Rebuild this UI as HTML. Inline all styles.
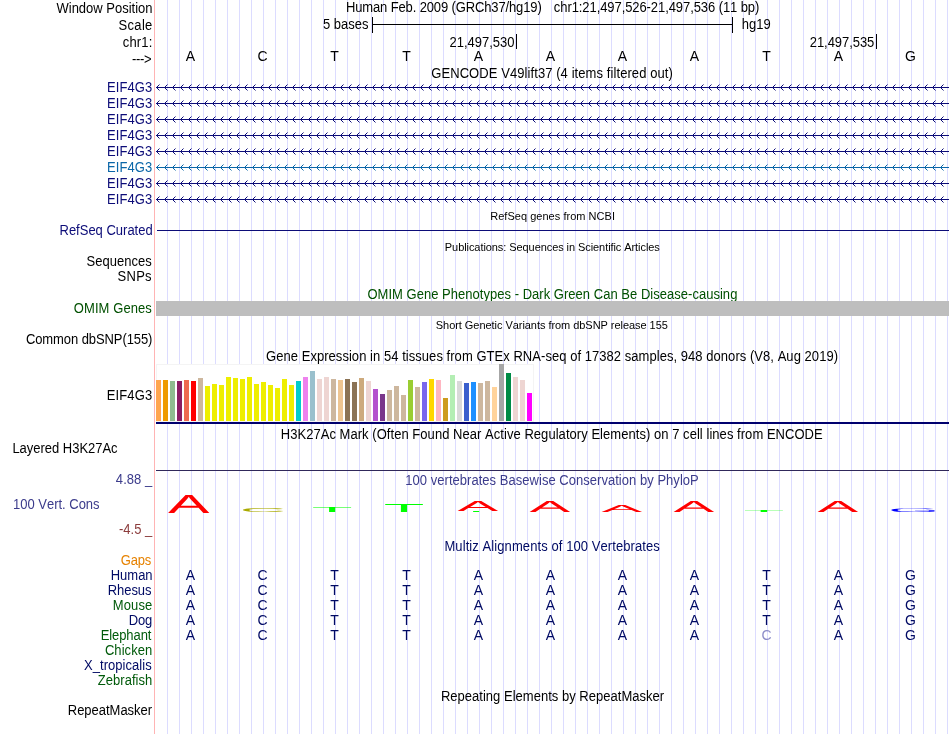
<!DOCTYPE html>
<html lang="en"><head><meta charset="utf-8"><title>UCSC Genome Browser chr1:21,497,526-21,497,536</title>
<style>
html,body{margin:0;padding:0;background:#fff;}
body{width:950px;height:734px;overflow:hidden;}
svg{display:block;will-change:transform;font-variant-ligatures:none;font-kerning:none;font-family:"Liberation Sans", Arial, Helvetica, sans-serif;font-size:13px;}
.r{text-anchor:end}
.m{text-anchor:middle}
.s{font-size:11px}
.b{font-size:14px;text-anchor:middle}
</style></head><body>
<svg width="950" height="734" viewBox="0 0 950 734">
<rect width="950" height="734" fill="#fff"/>

<g id="guides" shape-rendering="crispEdges" fill="#dcdcff">
<rect x="167" y="0" width="1" height="734"/>
<rect x="179" y="0" width="1" height="734"/>
<rect x="191" y="0" width="1" height="734"/>
<rect x="203" y="0" width="1" height="734"/>
<rect x="215" y="0" width="1" height="734"/>
<rect x="227" y="0" width="1" height="734"/>
<rect x="239" y="0" width="1" height="734"/>
<rect x="251" y="0" width="1" height="734"/>
<rect x="263" y="0" width="1" height="734"/>
<rect x="275" y="0" width="1" height="734"/>
<rect x="287" y="0" width="1" height="734"/>
<rect x="299" y="0" width="1" height="734"/>
<rect x="311" y="0" width="1" height="734"/>
<rect x="323" y="0" width="1" height="734"/>
<rect x="335" y="0" width="1" height="734"/>
<rect x="347" y="0" width="1" height="734"/>
<rect x="359" y="0" width="1" height="734"/>
<rect x="371" y="0" width="1" height="734"/>
<rect x="383" y="0" width="1" height="734"/>
<rect x="395" y="0" width="1" height="734"/>
<rect x="407" y="0" width="1" height="734"/>
<rect x="419" y="0" width="1" height="734"/>
<rect x="431" y="0" width="1" height="734"/>
<rect x="443" y="0" width="1" height="734"/>
<rect x="455" y="0" width="1" height="734"/>
<rect x="467" y="0" width="1" height="734"/>
<rect x="479" y="0" width="1" height="734"/>
<rect x="491" y="0" width="1" height="734"/>
<rect x="503" y="0" width="1" height="734"/>
<rect x="515" y="0" width="1" height="734"/>
<rect x="527" y="0" width="1" height="734"/>
<rect x="539" y="0" width="1" height="734"/>
<rect x="551" y="0" width="1" height="734"/>
<rect x="563" y="0" width="1" height="734"/>
<rect x="575" y="0" width="1" height="734"/>
<rect x="587" y="0" width="1" height="734"/>
<rect x="599" y="0" width="1" height="734"/>
<rect x="611" y="0" width="1" height="734"/>
<rect x="623" y="0" width="1" height="734"/>
<rect x="635" y="0" width="1" height="734"/>
<rect x="647" y="0" width="1" height="734"/>
<rect x="659" y="0" width="1" height="734"/>
<rect x="671" y="0" width="1" height="734"/>
<rect x="683" y="0" width="1" height="734"/>
<rect x="695" y="0" width="1" height="734"/>
<rect x="707" y="0" width="1" height="734"/>
<rect x="719" y="0" width="1" height="734"/>
<rect x="731" y="0" width="1" height="734"/>
<rect x="743" y="0" width="1" height="734"/>
<rect x="755" y="0" width="1" height="734"/>
<rect x="767" y="0" width="1" height="734"/>
<rect x="779" y="0" width="1" height="734"/>
<rect x="791" y="0" width="1" height="734"/>
<rect x="803" y="0" width="1" height="734"/>
<rect x="815" y="0" width="1" height="734"/>
<rect x="827" y="0" width="1" height="734"/>
<rect x="839" y="0" width="1" height="734"/>
<rect x="851" y="0" width="1" height="734"/>
<rect x="863" y="0" width="1" height="734"/>
<rect x="875" y="0" width="1" height="734"/>
<rect x="887" y="0" width="1" height="734"/>
<rect x="899" y="0" width="1" height="734"/>
<rect x="911" y="0" width="1" height="734"/>
<rect x="923" y="0" width="1" height="734"/>
<rect x="935" y="0" width="1" height="734"/>
<rect x="947" y="0" width="1" height="734"/>
</g>
<rect x="154" y="0" width="1" height="734" fill="#ffb4b4" shape-rendering="crispEdges"/>
<g id="labels">
<text x="152.51" transform="matrix(1 0 0 1.06 0 13)" class="r" textLength="96.00">Window Position</text>
<text x="152.34" transform="matrix(1 0 0 1.06 0 30)" class="r" textLength="33.78">Scale</text>
<text x="152.35" transform="matrix(1 0 0 1.06 0 47)" class="r" textLength="29.53">chr1:</text>
<text x="151.63" transform="matrix(1 0 0 1.06 0 64)" class="r" textLength="19.54">---&gt;</text>
<text x="345.95" transform="matrix(1 0 0 1.06 0 12)" textLength="195.80">Human Feb. 2009 (GRCh37/hg19)</text>
<text x="553.86" transform="matrix(1 0 0 1.06 0 12)" textLength="205.50">chr1:21,497,526-21,497,536 (11 bp)</text>
<text x="368.5" transform="matrix(1 0 0 1.06 0 29)" class="r">5 bases</text>
<text x="741.84" transform="matrix(1 0 0 1.06 0 29)" textLength="28.79">hg19</text>
<text x="514.5" transform="matrix(1 0 0 1.06 0 47)" class="r">21,497,530</text>
<text x="874.32" transform="matrix(1 0 0 1.06 0 47)" class="r" textLength="64.53">21,497,535</text>
<text x="190.5" y="61" class="b">A</text>
<text x="262.5" y="61" class="b">C</text>
<text x="334.5" y="61" class="b">T</text>
<text x="406.5" y="61" class="b">T</text>
<text x="478.5" y="61" class="b">A</text>
<text x="550.5" y="61" class="b">A</text>
<text x="622.5" y="61" class="b">A</text>
<text x="694.5" y="61" class="b">A</text>
<text x="766.5" y="61" class="b">T</text>
<text x="838.5" y="61" class="b">A</text>
<text x="910.5" y="61" class="b">G</text>
<text x="552.05" transform="matrix(1 0 0 1.06 0 78)" class="m" textLength="241.56">GENCODE V49lift37 (4 items filtered out)</text>
<text x="152.22" transform="matrix(1 0 0 1.06 0 92)" class="r" fill="#0c0c78" textLength="45.30">EIF4G3</text>
<text x="152.22" transform="matrix(1 0 0 1.06 0 108)" class="r" fill="#0c0c78" textLength="45.30">EIF4G3</text>
<text x="152.22" transform="matrix(1 0 0 1.06 0 124)" class="r" fill="#0c0c78" textLength="45.30">EIF4G3</text>
<text x="152.22" transform="matrix(1 0 0 1.06 0 140)" class="r" fill="#0c0c78" textLength="45.30">EIF4G3</text>
<text x="152.22" transform="matrix(1 0 0 1.06 0 156)" class="r" fill="#0c0c78" textLength="45.30">EIF4G3</text>
<text x="152.22" transform="matrix(1 0 0 1.06 0 172)" class="r" fill="#0a66a8" textLength="45.30">EIF4G3</text>
<text x="152.22" transform="matrix(1 0 0 1.06 0 188)" class="r" fill="#0c0c78" textLength="45.30">EIF4G3</text>
<text x="152.22" transform="matrix(1 0 0 1.06 0 204)" class="r" fill="#0c0c78" textLength="45.30">EIF4G3</text>
<text x="552.59" transform="matrix(1 0 0 1.06 0 220)" class="m s" textLength="124.72">RefSeq genes from NCBI</text>
<text x="152.7" transform="matrix(1 0 0 1.06 0 235)" class="r" fill="#0c0c78" textLength="93.18">RefSeq Curated</text>
<text x="552.34" transform="matrix(1 0 0 1.06 0 251)" class="m s" textLength="214.95">Publications: Sequences in Scientific Articles</text>
<text x="151.74" transform="matrix(1 0 0 1.06 0 266)" class="r" textLength="65.26">Sequences</text>
<text x="151.6" transform="matrix(1 0 0 1.06 0 281)" class="r" textLength="33.97">SNPs</text>
<text x="552.42" transform="matrix(1 0 0 1.06 0 299)" class="m" fill="#005000" textLength="369.91">OMIM Gene Phenotypes - Dark Green Can Be Disease-causing</text>
<text x="151.86" transform="matrix(1 0 0 1.06 0 313)" class="r" fill="#005000" textLength="78.03">OMIM Genes</text>
<text x="551.83" transform="matrix(1 0 0 1.06 0 329)" class="m s" textLength="232.02">Short Genetic Variants from dbSNP release 155</text>
<text x="152.44" transform="matrix(1 0 0 1.06 0 344)" class="r" textLength="126.53">Common dbSNP(155)</text>
<text x="552.04" transform="matrix(1 0 0 1.06 0 361)" class="m" textLength="571.97">Gene Expression in 54 tissues from GTEx RNA-seq of 17382 samples, 948 donors (V8, Aug 2019)</text>
<text x="152.17" transform="matrix(1 0 0 1.06 0 400)" class="r" textLength="45.39">EIF4G3</text>
<text x="551.73" transform="matrix(1 0 0 1.06 0 439)" class="m" textLength="541.98">H3K27Ac Mark (Often Found Near Active Regulatory Elements) on 7 cell lines from ENCODE</text>
<text x="12.41" transform="matrix(1 0 0 1.06 0 453)" textLength="105.17">Layered H3K27Ac</text>
<text x="552.02" transform="matrix(1 0 0 1.06 0 485)" class="m" fill="#3c3c8c" textLength="293.44">100 vertebrates Basewise Conservation by PhyloP</text>
<text x="152.17" transform="matrix(1 0 0 1.06 0 484)" class="r" fill="#3c3c8c" textLength="36.30">4.88 _</text>
<text x="13" transform="matrix(1 0 0 1.06 0 509)" fill="#3c3c8c">100 Vert. Cons</text>
<text x="152.24" transform="matrix(1 0 0 1.06 0 534)" class="r" fill="#8c3c3c" textLength="33.27">-4.5 _</text>
<text x="552.14" transform="matrix(1 0 0 1.06 0 551)" class="m" fill="#000a64" textLength="215.41">Multiz Alignments of 100 Vertebrates</text>
<text x="151.34" transform="matrix(1 0 0 1.06 0 565)" class="r" fill="#e68200" textLength="30.49">Gaps</text>
<text x="152.6" transform="matrix(1 0 0 1.06 0 580)" class="r" fill="#000a64">Human</text>
<text x="190.5" y="580" class="b" fill="#000a64">A</text>
<text x="262.5" y="580" class="b" fill="#000a64">C</text>
<text x="334.5" y="580" class="b" fill="#000a64">T</text>
<text x="406.5" y="580" class="b" fill="#000a64">T</text>
<text x="478.5" y="580" class="b" fill="#000a64">A</text>
<text x="550.5" y="580" class="b" fill="#000a64">A</text>
<text x="622.5" y="580" class="b" fill="#000a64">A</text>
<text x="694.5" y="580" class="b" fill="#000a64">A</text>
<text x="766.5" y="580" class="b" fill="#000a64">T</text>
<text x="838.5" y="580" class="b" fill="#000a64">A</text>
<text x="910.5" y="580" class="b" fill="#000a64">G</text>
<text x="151.45" transform="matrix(1 0 0 1.06 0 595)" class="r" fill="#000a64" textLength="43.71">Rhesus</text>
<text x="190.5" y="595" class="b" fill="#000a64">A</text>
<text x="262.5" y="595" class="b" fill="#000a64">C</text>
<text x="334.5" y="595" class="b" fill="#000a64">T</text>
<text x="406.5" y="595" class="b" fill="#000a64">T</text>
<text x="478.5" y="595" class="b" fill="#000a64">A</text>
<text x="550.5" y="595" class="b" fill="#000a64">A</text>
<text x="622.5" y="595" class="b" fill="#000a64">A</text>
<text x="694.5" y="595" class="b" fill="#000a64">A</text>
<text x="766.5" y="595" class="b" fill="#000a64">T</text>
<text x="838.5" y="595" class="b" fill="#000a64">A</text>
<text x="910.5" y="595" class="b" fill="#000a64">G</text>
<text x="152.29" transform="matrix(1 0 0 1.06 0 610)" class="r" fill="#005a0a" textLength="39.43">Mouse</text>
<text x="190.5" y="610" class="b" fill="#000a64">A</text>
<text x="262.5" y="610" class="b" fill="#000a64">C</text>
<text x="334.5" y="610" class="b" fill="#000a64">T</text>
<text x="406.5" y="610" class="b" fill="#000a64">T</text>
<text x="478.5" y="610" class="b" fill="#000a64">A</text>
<text x="550.5" y="610" class="b" fill="#000a64">A</text>
<text x="622.5" y="610" class="b" fill="#000a64">A</text>
<text x="694.5" y="610" class="b" fill="#000a64">A</text>
<text x="766.5" y="610" class="b" fill="#000a64">T</text>
<text x="838.5" y="610" class="b" fill="#000a64">A</text>
<text x="910.5" y="610" class="b" fill="#000a64">G</text>
<text x="152.36" transform="matrix(1 0 0 1.06 0 625)" class="r" fill="#000a64" textLength="23.66">Dog</text>
<text x="190.5" y="625" class="b" fill="#000a64">A</text>
<text x="262.5" y="625" class="b" fill="#000a64">C</text>
<text x="334.5" y="625" class="b" fill="#000a64">T</text>
<text x="406.5" y="625" class="b" fill="#000a64">T</text>
<text x="478.5" y="625" class="b" fill="#000a64">A</text>
<text x="550.5" y="625" class="b" fill="#000a64">A</text>
<text x="622.5" y="625" class="b" fill="#000a64">A</text>
<text x="694.5" y="625" class="b" fill="#000a64">A</text>
<text x="766.5" y="625" class="b" fill="#000a64">T</text>
<text x="838.5" y="625" class="b" fill="#000a64">A</text>
<text x="910.5" y="625" class="b" fill="#000a64">G</text>
<text x="151.4" transform="matrix(1 0 0 1.06 0 640)" class="r" fill="#005a0a" textLength="50.69">Elephant</text>
<text x="190.5" y="640" class="b" fill="#000a64">A</text>
<text x="262.5" y="640" class="b" fill="#000a64">C</text>
<text x="334.5" y="640" class="b" fill="#000a64">T</text>
<text x="406.5" y="640" class="b" fill="#000a64">T</text>
<text x="478.5" y="640" class="b" fill="#000a64">A</text>
<text x="550.5" y="640" class="b" fill="#000a64">A</text>
<text x="622.5" y="640" class="b" fill="#000a64">A</text>
<text x="694.5" y="640" class="b" fill="#000a64">A</text>
<text x="766.5" y="640" class="b" fill="#8c8cc8">C</text>
<text x="838.5" y="640" class="b" fill="#000a64">A</text>
<text x="910.5" y="640" class="b" fill="#000a64">G</text>
<text x="152.23" transform="matrix(1 0 0 1.06 0 655)" class="r" fill="#005a0a" textLength="47.30">Chicken</text>
<text x="151.7" transform="matrix(1 0 0 1.06 0 670)" class="r" fill="#000a64" textLength="67.70">X_tropicalis</text>
<text x="152.3" transform="matrix(1 0 0 1.06 0 685)" class="r" fill="#005a0a" textLength="54.58">Zebrafish</text>
<text x="552.49" transform="matrix(1 0 0 1.06 0 701)" class="m" textLength="223.21">Repeating Elements by RepeatMasker</text>
<text x="152.1" transform="matrix(1 0 0 1.06 0 715)" class="r" textLength="84.30">RepeatMasker</text>
</g>
<g shape-rendering="crispEdges" fill="#000"><rect x="372" y="24" width="361" height="1"/><rect x="372" y="17" width="1" height="16"/><rect x="732" y="17" width="1" height="16"/>
<rect x="516" y="34" width="1" height="15"/><rect x="876" y="34" width="1" height="15"/></g>
<g stroke="#0c0c78" fill="none" stroke-width="1">
<path d="M156 87.5H949" shape-rendering="crispEdges"/>
<path d="M159.5 84.5L156.5 87.5L159.5 90.5M167.5 84.5L164.5 87.5L167.5 90.5M175.5 84.5L172.5 87.5L175.5 90.5M183.5 84.5L180.5 87.5L183.5 90.5M191.5 84.5L188.5 87.5L191.5 90.5M199.5 84.5L196.5 87.5L199.5 90.5M207.5 84.5L204.5 87.5L207.5 90.5M215.5 84.5L212.5 87.5L215.5 90.5M223.5 84.5L220.5 87.5L223.5 90.5M231.5 84.5L228.5 87.5L231.5 90.5M239.5 84.5L236.5 87.5L239.5 90.5M247.5 84.5L244.5 87.5L247.5 90.5M255.5 84.5L252.5 87.5L255.5 90.5M263.5 84.5L260.5 87.5L263.5 90.5M271.5 84.5L268.5 87.5L271.5 90.5M279.5 84.5L276.5 87.5L279.5 90.5M287.5 84.5L284.5 87.5L287.5 90.5M295.5 84.5L292.5 87.5L295.5 90.5M303.5 84.5L300.5 87.5L303.5 90.5M311.5 84.5L308.5 87.5L311.5 90.5M319.5 84.5L316.5 87.5L319.5 90.5M327.5 84.5L324.5 87.5L327.5 90.5M335.5 84.5L332.5 87.5L335.5 90.5M343.5 84.5L340.5 87.5L343.5 90.5M351.5 84.5L348.5 87.5L351.5 90.5M359.5 84.5L356.5 87.5L359.5 90.5M367.5 84.5L364.5 87.5L367.5 90.5M375.5 84.5L372.5 87.5L375.5 90.5M383.5 84.5L380.5 87.5L383.5 90.5M391.5 84.5L388.5 87.5L391.5 90.5M399.5 84.5L396.5 87.5L399.5 90.5M407.5 84.5L404.5 87.5L407.5 90.5M415.5 84.5L412.5 87.5L415.5 90.5M423.5 84.5L420.5 87.5L423.5 90.5M431.5 84.5L428.5 87.5L431.5 90.5M439.5 84.5L436.5 87.5L439.5 90.5M447.5 84.5L444.5 87.5L447.5 90.5M455.5 84.5L452.5 87.5L455.5 90.5M463.5 84.5L460.5 87.5L463.5 90.5M471.5 84.5L468.5 87.5L471.5 90.5M479.5 84.5L476.5 87.5L479.5 90.5M487.5 84.5L484.5 87.5L487.5 90.5M495.5 84.5L492.5 87.5L495.5 90.5M503.5 84.5L500.5 87.5L503.5 90.5M511.5 84.5L508.5 87.5L511.5 90.5M519.5 84.5L516.5 87.5L519.5 90.5M527.5 84.5L524.5 87.5L527.5 90.5M535.5 84.5L532.5 87.5L535.5 90.5M543.5 84.5L540.5 87.5L543.5 90.5M551.5 84.5L548.5 87.5L551.5 90.5M559.5 84.5L556.5 87.5L559.5 90.5M567.5 84.5L564.5 87.5L567.5 90.5M575.5 84.5L572.5 87.5L575.5 90.5M583.5 84.5L580.5 87.5L583.5 90.5M591.5 84.5L588.5 87.5L591.5 90.5M599.5 84.5L596.5 87.5L599.5 90.5M607.5 84.5L604.5 87.5L607.5 90.5M615.5 84.5L612.5 87.5L615.5 90.5M623.5 84.5L620.5 87.5L623.5 90.5M631.5 84.5L628.5 87.5L631.5 90.5M639.5 84.5L636.5 87.5L639.5 90.5M647.5 84.5L644.5 87.5L647.5 90.5M655.5 84.5L652.5 87.5L655.5 90.5M663.5 84.5L660.5 87.5L663.5 90.5M671.5 84.5L668.5 87.5L671.5 90.5M679.5 84.5L676.5 87.5L679.5 90.5M687.5 84.5L684.5 87.5L687.5 90.5M695.5 84.5L692.5 87.5L695.5 90.5M703.5 84.5L700.5 87.5L703.5 90.5M711.5 84.5L708.5 87.5L711.5 90.5M719.5 84.5L716.5 87.5L719.5 90.5M727.5 84.5L724.5 87.5L727.5 90.5M735.5 84.5L732.5 87.5L735.5 90.5M743.5 84.5L740.5 87.5L743.5 90.5M751.5 84.5L748.5 87.5L751.5 90.5M759.5 84.5L756.5 87.5L759.5 90.5M767.5 84.5L764.5 87.5L767.5 90.5M775.5 84.5L772.5 87.5L775.5 90.5M783.5 84.5L780.5 87.5L783.5 90.5M791.5 84.5L788.5 87.5L791.5 90.5M799.5 84.5L796.5 87.5L799.5 90.5M807.5 84.5L804.5 87.5L807.5 90.5M815.5 84.5L812.5 87.5L815.5 90.5M823.5 84.5L820.5 87.5L823.5 90.5M831.5 84.5L828.5 87.5L831.5 90.5M839.5 84.5L836.5 87.5L839.5 90.5M847.5 84.5L844.5 87.5L847.5 90.5M855.5 84.5L852.5 87.5L855.5 90.5M863.5 84.5L860.5 87.5L863.5 90.5M871.5 84.5L868.5 87.5L871.5 90.5M879.5 84.5L876.5 87.5L879.5 90.5M887.5 84.5L884.5 87.5L887.5 90.5M895.5 84.5L892.5 87.5L895.5 90.5M903.5 84.5L900.5 87.5L903.5 90.5M911.5 84.5L908.5 87.5L911.5 90.5M919.5 84.5L916.5 87.5L919.5 90.5M927.5 84.5L924.5 87.5L927.5 90.5M935.5 84.5L932.5 87.5L935.5 90.5M943.5 84.5L940.5 87.5L943.5 90.5"/>
</g>
<g stroke="#0c0c78" fill="none" stroke-width="1">
<path d="M156 103.5H949" shape-rendering="crispEdges"/>
<path d="M159.5 100.5L156.5 103.5L159.5 106.5M167.5 100.5L164.5 103.5L167.5 106.5M175.5 100.5L172.5 103.5L175.5 106.5M183.5 100.5L180.5 103.5L183.5 106.5M191.5 100.5L188.5 103.5L191.5 106.5M199.5 100.5L196.5 103.5L199.5 106.5M207.5 100.5L204.5 103.5L207.5 106.5M215.5 100.5L212.5 103.5L215.5 106.5M223.5 100.5L220.5 103.5L223.5 106.5M231.5 100.5L228.5 103.5L231.5 106.5M239.5 100.5L236.5 103.5L239.5 106.5M247.5 100.5L244.5 103.5L247.5 106.5M255.5 100.5L252.5 103.5L255.5 106.5M263.5 100.5L260.5 103.5L263.5 106.5M271.5 100.5L268.5 103.5L271.5 106.5M279.5 100.5L276.5 103.5L279.5 106.5M287.5 100.5L284.5 103.5L287.5 106.5M295.5 100.5L292.5 103.5L295.5 106.5M303.5 100.5L300.5 103.5L303.5 106.5M311.5 100.5L308.5 103.5L311.5 106.5M319.5 100.5L316.5 103.5L319.5 106.5M327.5 100.5L324.5 103.5L327.5 106.5M335.5 100.5L332.5 103.5L335.5 106.5M343.5 100.5L340.5 103.5L343.5 106.5M351.5 100.5L348.5 103.5L351.5 106.5M359.5 100.5L356.5 103.5L359.5 106.5M367.5 100.5L364.5 103.5L367.5 106.5M375.5 100.5L372.5 103.5L375.5 106.5M383.5 100.5L380.5 103.5L383.5 106.5M391.5 100.5L388.5 103.5L391.5 106.5M399.5 100.5L396.5 103.5L399.5 106.5M407.5 100.5L404.5 103.5L407.5 106.5M415.5 100.5L412.5 103.5L415.5 106.5M423.5 100.5L420.5 103.5L423.5 106.5M431.5 100.5L428.5 103.5L431.5 106.5M439.5 100.5L436.5 103.5L439.5 106.5M447.5 100.5L444.5 103.5L447.5 106.5M455.5 100.5L452.5 103.5L455.5 106.5M463.5 100.5L460.5 103.5L463.5 106.5M471.5 100.5L468.5 103.5L471.5 106.5M479.5 100.5L476.5 103.5L479.5 106.5M487.5 100.5L484.5 103.5L487.5 106.5M495.5 100.5L492.5 103.5L495.5 106.5M503.5 100.5L500.5 103.5L503.5 106.5M511.5 100.5L508.5 103.5L511.5 106.5M519.5 100.5L516.5 103.5L519.5 106.5M527.5 100.5L524.5 103.5L527.5 106.5M535.5 100.5L532.5 103.5L535.5 106.5M543.5 100.5L540.5 103.5L543.5 106.5M551.5 100.5L548.5 103.5L551.5 106.5M559.5 100.5L556.5 103.5L559.5 106.5M567.5 100.5L564.5 103.5L567.5 106.5M575.5 100.5L572.5 103.5L575.5 106.5M583.5 100.5L580.5 103.5L583.5 106.5M591.5 100.5L588.5 103.5L591.5 106.5M599.5 100.5L596.5 103.5L599.5 106.5M607.5 100.5L604.5 103.5L607.5 106.5M615.5 100.5L612.5 103.5L615.5 106.5M623.5 100.5L620.5 103.5L623.5 106.5M631.5 100.5L628.5 103.5L631.5 106.5M639.5 100.5L636.5 103.5L639.5 106.5M647.5 100.5L644.5 103.5L647.5 106.5M655.5 100.5L652.5 103.5L655.5 106.5M663.5 100.5L660.5 103.5L663.5 106.5M671.5 100.5L668.5 103.5L671.5 106.5M679.5 100.5L676.5 103.5L679.5 106.5M687.5 100.5L684.5 103.5L687.5 106.5M695.5 100.5L692.5 103.5L695.5 106.5M703.5 100.5L700.5 103.5L703.5 106.5M711.5 100.5L708.5 103.5L711.5 106.5M719.5 100.5L716.5 103.5L719.5 106.5M727.5 100.5L724.5 103.5L727.5 106.5M735.5 100.5L732.5 103.5L735.5 106.5M743.5 100.5L740.5 103.5L743.5 106.5M751.5 100.5L748.5 103.5L751.5 106.5M759.5 100.5L756.5 103.5L759.5 106.5M767.5 100.5L764.5 103.5L767.5 106.5M775.5 100.5L772.5 103.5L775.5 106.5M783.5 100.5L780.5 103.5L783.5 106.5M791.5 100.5L788.5 103.5L791.5 106.5M799.5 100.5L796.5 103.5L799.5 106.5M807.5 100.5L804.5 103.5L807.5 106.5M815.5 100.5L812.5 103.5L815.5 106.5M823.5 100.5L820.5 103.5L823.5 106.5M831.5 100.5L828.5 103.5L831.5 106.5M839.5 100.5L836.5 103.5L839.5 106.5M847.5 100.5L844.5 103.5L847.5 106.5M855.5 100.5L852.5 103.5L855.5 106.5M863.5 100.5L860.5 103.5L863.5 106.5M871.5 100.5L868.5 103.5L871.5 106.5M879.5 100.5L876.5 103.5L879.5 106.5M887.5 100.5L884.5 103.5L887.5 106.5M895.5 100.5L892.5 103.5L895.5 106.5M903.5 100.5L900.5 103.5L903.5 106.5M911.5 100.5L908.5 103.5L911.5 106.5M919.5 100.5L916.5 103.5L919.5 106.5M927.5 100.5L924.5 103.5L927.5 106.5M935.5 100.5L932.5 103.5L935.5 106.5M943.5 100.5L940.5 103.5L943.5 106.5"/>
</g>
<g stroke="#0c0c78" fill="none" stroke-width="1">
<path d="M156 119.5H949" shape-rendering="crispEdges"/>
<path d="M159.5 116.5L156.5 119.5L159.5 122.5M167.5 116.5L164.5 119.5L167.5 122.5M175.5 116.5L172.5 119.5L175.5 122.5M183.5 116.5L180.5 119.5L183.5 122.5M191.5 116.5L188.5 119.5L191.5 122.5M199.5 116.5L196.5 119.5L199.5 122.5M207.5 116.5L204.5 119.5L207.5 122.5M215.5 116.5L212.5 119.5L215.5 122.5M223.5 116.5L220.5 119.5L223.5 122.5M231.5 116.5L228.5 119.5L231.5 122.5M239.5 116.5L236.5 119.5L239.5 122.5M247.5 116.5L244.5 119.5L247.5 122.5M255.5 116.5L252.5 119.5L255.5 122.5M263.5 116.5L260.5 119.5L263.5 122.5M271.5 116.5L268.5 119.5L271.5 122.5M279.5 116.5L276.5 119.5L279.5 122.5M287.5 116.5L284.5 119.5L287.5 122.5M295.5 116.5L292.5 119.5L295.5 122.5M303.5 116.5L300.5 119.5L303.5 122.5M311.5 116.5L308.5 119.5L311.5 122.5M319.5 116.5L316.5 119.5L319.5 122.5M327.5 116.5L324.5 119.5L327.5 122.5M335.5 116.5L332.5 119.5L335.5 122.5M343.5 116.5L340.5 119.5L343.5 122.5M351.5 116.5L348.5 119.5L351.5 122.5M359.5 116.5L356.5 119.5L359.5 122.5M367.5 116.5L364.5 119.5L367.5 122.5M375.5 116.5L372.5 119.5L375.5 122.5M383.5 116.5L380.5 119.5L383.5 122.5M391.5 116.5L388.5 119.5L391.5 122.5M399.5 116.5L396.5 119.5L399.5 122.5M407.5 116.5L404.5 119.5L407.5 122.5M415.5 116.5L412.5 119.5L415.5 122.5M423.5 116.5L420.5 119.5L423.5 122.5M431.5 116.5L428.5 119.5L431.5 122.5M439.5 116.5L436.5 119.5L439.5 122.5M447.5 116.5L444.5 119.5L447.5 122.5M455.5 116.5L452.5 119.5L455.5 122.5M463.5 116.5L460.5 119.5L463.5 122.5M471.5 116.5L468.5 119.5L471.5 122.5M479.5 116.5L476.5 119.5L479.5 122.5M487.5 116.5L484.5 119.5L487.5 122.5M495.5 116.5L492.5 119.5L495.5 122.5M503.5 116.5L500.5 119.5L503.5 122.5M511.5 116.5L508.5 119.5L511.5 122.5M519.5 116.5L516.5 119.5L519.5 122.5M527.5 116.5L524.5 119.5L527.5 122.5M535.5 116.5L532.5 119.5L535.5 122.5M543.5 116.5L540.5 119.5L543.5 122.5M551.5 116.5L548.5 119.5L551.5 122.5M559.5 116.5L556.5 119.5L559.5 122.5M567.5 116.5L564.5 119.5L567.5 122.5M575.5 116.5L572.5 119.5L575.5 122.5M583.5 116.5L580.5 119.5L583.5 122.5M591.5 116.5L588.5 119.5L591.5 122.5M599.5 116.5L596.5 119.5L599.5 122.5M607.5 116.5L604.5 119.5L607.5 122.5M615.5 116.5L612.5 119.5L615.5 122.5M623.5 116.5L620.5 119.5L623.5 122.5M631.5 116.5L628.5 119.5L631.5 122.5M639.5 116.5L636.5 119.5L639.5 122.5M647.5 116.5L644.5 119.5L647.5 122.5M655.5 116.5L652.5 119.5L655.5 122.5M663.5 116.5L660.5 119.5L663.5 122.5M671.5 116.5L668.5 119.5L671.5 122.5M679.5 116.5L676.5 119.5L679.5 122.5M687.5 116.5L684.5 119.5L687.5 122.5M695.5 116.5L692.5 119.5L695.5 122.5M703.5 116.5L700.5 119.5L703.5 122.5M711.5 116.5L708.5 119.5L711.5 122.5M719.5 116.5L716.5 119.5L719.5 122.5M727.5 116.5L724.5 119.5L727.5 122.5M735.5 116.5L732.5 119.5L735.5 122.5M743.5 116.5L740.5 119.5L743.5 122.5M751.5 116.5L748.5 119.5L751.5 122.5M759.5 116.5L756.5 119.5L759.5 122.5M767.5 116.5L764.5 119.5L767.5 122.5M775.5 116.5L772.5 119.5L775.5 122.5M783.5 116.5L780.5 119.5L783.5 122.5M791.5 116.5L788.5 119.5L791.5 122.5M799.5 116.5L796.5 119.5L799.5 122.5M807.5 116.5L804.5 119.5L807.5 122.5M815.5 116.5L812.5 119.5L815.5 122.5M823.5 116.5L820.5 119.5L823.5 122.5M831.5 116.5L828.5 119.5L831.5 122.5M839.5 116.5L836.5 119.5L839.5 122.5M847.5 116.5L844.5 119.5L847.5 122.5M855.5 116.5L852.5 119.5L855.5 122.5M863.5 116.5L860.5 119.5L863.5 122.5M871.5 116.5L868.5 119.5L871.5 122.5M879.5 116.5L876.5 119.5L879.5 122.5M887.5 116.5L884.5 119.5L887.5 122.5M895.5 116.5L892.5 119.5L895.5 122.5M903.5 116.5L900.5 119.5L903.5 122.5M911.5 116.5L908.5 119.5L911.5 122.5M919.5 116.5L916.5 119.5L919.5 122.5M927.5 116.5L924.5 119.5L927.5 122.5M935.5 116.5L932.5 119.5L935.5 122.5M943.5 116.5L940.5 119.5L943.5 122.5"/>
</g>
<g stroke="#0c0c78" fill="none" stroke-width="1">
<path d="M156 135.5H949" shape-rendering="crispEdges"/>
<path d="M159.5 132.5L156.5 135.5L159.5 138.5M167.5 132.5L164.5 135.5L167.5 138.5M175.5 132.5L172.5 135.5L175.5 138.5M183.5 132.5L180.5 135.5L183.5 138.5M191.5 132.5L188.5 135.5L191.5 138.5M199.5 132.5L196.5 135.5L199.5 138.5M207.5 132.5L204.5 135.5L207.5 138.5M215.5 132.5L212.5 135.5L215.5 138.5M223.5 132.5L220.5 135.5L223.5 138.5M231.5 132.5L228.5 135.5L231.5 138.5M239.5 132.5L236.5 135.5L239.5 138.5M247.5 132.5L244.5 135.5L247.5 138.5M255.5 132.5L252.5 135.5L255.5 138.5M263.5 132.5L260.5 135.5L263.5 138.5M271.5 132.5L268.5 135.5L271.5 138.5M279.5 132.5L276.5 135.5L279.5 138.5M287.5 132.5L284.5 135.5L287.5 138.5M295.5 132.5L292.5 135.5L295.5 138.5M303.5 132.5L300.5 135.5L303.5 138.5M311.5 132.5L308.5 135.5L311.5 138.5M319.5 132.5L316.5 135.5L319.5 138.5M327.5 132.5L324.5 135.5L327.5 138.5M335.5 132.5L332.5 135.5L335.5 138.5M343.5 132.5L340.5 135.5L343.5 138.5M351.5 132.5L348.5 135.5L351.5 138.5M359.5 132.5L356.5 135.5L359.5 138.5M367.5 132.5L364.5 135.5L367.5 138.5M375.5 132.5L372.5 135.5L375.5 138.5M383.5 132.5L380.5 135.5L383.5 138.5M391.5 132.5L388.5 135.5L391.5 138.5M399.5 132.5L396.5 135.5L399.5 138.5M407.5 132.5L404.5 135.5L407.5 138.5M415.5 132.5L412.5 135.5L415.5 138.5M423.5 132.5L420.5 135.5L423.5 138.5M431.5 132.5L428.5 135.5L431.5 138.5M439.5 132.5L436.5 135.5L439.5 138.5M447.5 132.5L444.5 135.5L447.5 138.5M455.5 132.5L452.5 135.5L455.5 138.5M463.5 132.5L460.5 135.5L463.5 138.5M471.5 132.5L468.5 135.5L471.5 138.5M479.5 132.5L476.5 135.5L479.5 138.5M487.5 132.5L484.5 135.5L487.5 138.5M495.5 132.5L492.5 135.5L495.5 138.5M503.5 132.5L500.5 135.5L503.5 138.5M511.5 132.5L508.5 135.5L511.5 138.5M519.5 132.5L516.5 135.5L519.5 138.5M527.5 132.5L524.5 135.5L527.5 138.5M535.5 132.5L532.5 135.5L535.5 138.5M543.5 132.5L540.5 135.5L543.5 138.5M551.5 132.5L548.5 135.5L551.5 138.5M559.5 132.5L556.5 135.5L559.5 138.5M567.5 132.5L564.5 135.5L567.5 138.5M575.5 132.5L572.5 135.5L575.5 138.5M583.5 132.5L580.5 135.5L583.5 138.5M591.5 132.5L588.5 135.5L591.5 138.5M599.5 132.5L596.5 135.5L599.5 138.5M607.5 132.5L604.5 135.5L607.5 138.5M615.5 132.5L612.5 135.5L615.5 138.5M623.5 132.5L620.5 135.5L623.5 138.5M631.5 132.5L628.5 135.5L631.5 138.5M639.5 132.5L636.5 135.5L639.5 138.5M647.5 132.5L644.5 135.5L647.5 138.5M655.5 132.5L652.5 135.5L655.5 138.5M663.5 132.5L660.5 135.5L663.5 138.5M671.5 132.5L668.5 135.5L671.5 138.5M679.5 132.5L676.5 135.5L679.5 138.5M687.5 132.5L684.5 135.5L687.5 138.5M695.5 132.5L692.5 135.5L695.5 138.5M703.5 132.5L700.5 135.5L703.5 138.5M711.5 132.5L708.5 135.5L711.5 138.5M719.5 132.5L716.5 135.5L719.5 138.5M727.5 132.5L724.5 135.5L727.5 138.5M735.5 132.5L732.5 135.5L735.5 138.5M743.5 132.5L740.5 135.5L743.5 138.5M751.5 132.5L748.5 135.5L751.5 138.5M759.5 132.5L756.5 135.5L759.5 138.5M767.5 132.5L764.5 135.5L767.5 138.5M775.5 132.5L772.5 135.5L775.5 138.5M783.5 132.5L780.5 135.5L783.5 138.5M791.5 132.5L788.5 135.5L791.5 138.5M799.5 132.5L796.5 135.5L799.5 138.5M807.5 132.5L804.5 135.5L807.5 138.5M815.5 132.5L812.5 135.5L815.5 138.5M823.5 132.5L820.5 135.5L823.5 138.5M831.5 132.5L828.5 135.5L831.5 138.5M839.5 132.5L836.5 135.5L839.5 138.5M847.5 132.5L844.5 135.5L847.5 138.5M855.5 132.5L852.5 135.5L855.5 138.5M863.5 132.5L860.5 135.5L863.5 138.5M871.5 132.5L868.5 135.5L871.5 138.5M879.5 132.5L876.5 135.5L879.5 138.5M887.5 132.5L884.5 135.5L887.5 138.5M895.5 132.5L892.5 135.5L895.5 138.5M903.5 132.5L900.5 135.5L903.5 138.5M911.5 132.5L908.5 135.5L911.5 138.5M919.5 132.5L916.5 135.5L919.5 138.5M927.5 132.5L924.5 135.5L927.5 138.5M935.5 132.5L932.5 135.5L935.5 138.5M943.5 132.5L940.5 135.5L943.5 138.5"/>
</g>
<g stroke="#0c0c78" fill="none" stroke-width="1">
<path d="M156 151.5H949" shape-rendering="crispEdges"/>
<path d="M159.5 148.5L156.5 151.5L159.5 154.5M167.5 148.5L164.5 151.5L167.5 154.5M175.5 148.5L172.5 151.5L175.5 154.5M183.5 148.5L180.5 151.5L183.5 154.5M191.5 148.5L188.5 151.5L191.5 154.5M199.5 148.5L196.5 151.5L199.5 154.5M207.5 148.5L204.5 151.5L207.5 154.5M215.5 148.5L212.5 151.5L215.5 154.5M223.5 148.5L220.5 151.5L223.5 154.5M231.5 148.5L228.5 151.5L231.5 154.5M239.5 148.5L236.5 151.5L239.5 154.5M247.5 148.5L244.5 151.5L247.5 154.5M255.5 148.5L252.5 151.5L255.5 154.5M263.5 148.5L260.5 151.5L263.5 154.5M271.5 148.5L268.5 151.5L271.5 154.5M279.5 148.5L276.5 151.5L279.5 154.5M287.5 148.5L284.5 151.5L287.5 154.5M295.5 148.5L292.5 151.5L295.5 154.5M303.5 148.5L300.5 151.5L303.5 154.5M311.5 148.5L308.5 151.5L311.5 154.5M319.5 148.5L316.5 151.5L319.5 154.5M327.5 148.5L324.5 151.5L327.5 154.5M335.5 148.5L332.5 151.5L335.5 154.5M343.5 148.5L340.5 151.5L343.5 154.5M351.5 148.5L348.5 151.5L351.5 154.5M359.5 148.5L356.5 151.5L359.5 154.5M367.5 148.5L364.5 151.5L367.5 154.5M375.5 148.5L372.5 151.5L375.5 154.5M383.5 148.5L380.5 151.5L383.5 154.5M391.5 148.5L388.5 151.5L391.5 154.5M399.5 148.5L396.5 151.5L399.5 154.5M407.5 148.5L404.5 151.5L407.5 154.5M415.5 148.5L412.5 151.5L415.5 154.5M423.5 148.5L420.5 151.5L423.5 154.5M431.5 148.5L428.5 151.5L431.5 154.5M439.5 148.5L436.5 151.5L439.5 154.5M447.5 148.5L444.5 151.5L447.5 154.5M455.5 148.5L452.5 151.5L455.5 154.5M463.5 148.5L460.5 151.5L463.5 154.5M471.5 148.5L468.5 151.5L471.5 154.5M479.5 148.5L476.5 151.5L479.5 154.5M487.5 148.5L484.5 151.5L487.5 154.5M495.5 148.5L492.5 151.5L495.5 154.5M503.5 148.5L500.5 151.5L503.5 154.5M511.5 148.5L508.5 151.5L511.5 154.5M519.5 148.5L516.5 151.5L519.5 154.5M527.5 148.5L524.5 151.5L527.5 154.5M535.5 148.5L532.5 151.5L535.5 154.5M543.5 148.5L540.5 151.5L543.5 154.5M551.5 148.5L548.5 151.5L551.5 154.5M559.5 148.5L556.5 151.5L559.5 154.5M567.5 148.5L564.5 151.5L567.5 154.5M575.5 148.5L572.5 151.5L575.5 154.5M583.5 148.5L580.5 151.5L583.5 154.5M591.5 148.5L588.5 151.5L591.5 154.5M599.5 148.5L596.5 151.5L599.5 154.5M607.5 148.5L604.5 151.5L607.5 154.5M615.5 148.5L612.5 151.5L615.5 154.5M623.5 148.5L620.5 151.5L623.5 154.5M631.5 148.5L628.5 151.5L631.5 154.5M639.5 148.5L636.5 151.5L639.5 154.5M647.5 148.5L644.5 151.5L647.5 154.5M655.5 148.5L652.5 151.5L655.5 154.5M663.5 148.5L660.5 151.5L663.5 154.5M671.5 148.5L668.5 151.5L671.5 154.5M679.5 148.5L676.5 151.5L679.5 154.5M687.5 148.5L684.5 151.5L687.5 154.5M695.5 148.5L692.5 151.5L695.5 154.5M703.5 148.5L700.5 151.5L703.5 154.5M711.5 148.5L708.5 151.5L711.5 154.5M719.5 148.5L716.5 151.5L719.5 154.5M727.5 148.5L724.5 151.5L727.5 154.5M735.5 148.5L732.5 151.5L735.5 154.5M743.5 148.5L740.5 151.5L743.5 154.5M751.5 148.5L748.5 151.5L751.5 154.5M759.5 148.5L756.5 151.5L759.5 154.5M767.5 148.5L764.5 151.5L767.5 154.5M775.5 148.5L772.5 151.5L775.5 154.5M783.5 148.5L780.5 151.5L783.5 154.5M791.5 148.5L788.5 151.5L791.5 154.5M799.5 148.5L796.5 151.5L799.5 154.5M807.5 148.5L804.5 151.5L807.5 154.5M815.5 148.5L812.5 151.5L815.5 154.5M823.5 148.5L820.5 151.5L823.5 154.5M831.5 148.5L828.5 151.5L831.5 154.5M839.5 148.5L836.5 151.5L839.5 154.5M847.5 148.5L844.5 151.5L847.5 154.5M855.5 148.5L852.5 151.5L855.5 154.5M863.5 148.5L860.5 151.5L863.5 154.5M871.5 148.5L868.5 151.5L871.5 154.5M879.5 148.5L876.5 151.5L879.5 154.5M887.5 148.5L884.5 151.5L887.5 154.5M895.5 148.5L892.5 151.5L895.5 154.5M903.5 148.5L900.5 151.5L903.5 154.5M911.5 148.5L908.5 151.5L911.5 154.5M919.5 148.5L916.5 151.5L919.5 154.5M927.5 148.5L924.5 151.5L927.5 154.5M935.5 148.5L932.5 151.5L935.5 154.5M943.5 148.5L940.5 151.5L943.5 154.5"/>
</g>
<g stroke="#0a66a8" fill="none" stroke-width="1">
<path d="M156 167.5H949" shape-rendering="crispEdges"/>
<path d="M159.5 164.5L156.5 167.5L159.5 170.5M167.5 164.5L164.5 167.5L167.5 170.5M175.5 164.5L172.5 167.5L175.5 170.5M183.5 164.5L180.5 167.5L183.5 170.5M191.5 164.5L188.5 167.5L191.5 170.5M199.5 164.5L196.5 167.5L199.5 170.5M207.5 164.5L204.5 167.5L207.5 170.5M215.5 164.5L212.5 167.5L215.5 170.5M223.5 164.5L220.5 167.5L223.5 170.5M231.5 164.5L228.5 167.5L231.5 170.5M239.5 164.5L236.5 167.5L239.5 170.5M247.5 164.5L244.5 167.5L247.5 170.5M255.5 164.5L252.5 167.5L255.5 170.5M263.5 164.5L260.5 167.5L263.5 170.5M271.5 164.5L268.5 167.5L271.5 170.5M279.5 164.5L276.5 167.5L279.5 170.5M287.5 164.5L284.5 167.5L287.5 170.5M295.5 164.5L292.5 167.5L295.5 170.5M303.5 164.5L300.5 167.5L303.5 170.5M311.5 164.5L308.5 167.5L311.5 170.5M319.5 164.5L316.5 167.5L319.5 170.5M327.5 164.5L324.5 167.5L327.5 170.5M335.5 164.5L332.5 167.5L335.5 170.5M343.5 164.5L340.5 167.5L343.5 170.5M351.5 164.5L348.5 167.5L351.5 170.5M359.5 164.5L356.5 167.5L359.5 170.5M367.5 164.5L364.5 167.5L367.5 170.5M375.5 164.5L372.5 167.5L375.5 170.5M383.5 164.5L380.5 167.5L383.5 170.5M391.5 164.5L388.5 167.5L391.5 170.5M399.5 164.5L396.5 167.5L399.5 170.5M407.5 164.5L404.5 167.5L407.5 170.5M415.5 164.5L412.5 167.5L415.5 170.5M423.5 164.5L420.5 167.5L423.5 170.5M431.5 164.5L428.5 167.5L431.5 170.5M439.5 164.5L436.5 167.5L439.5 170.5M447.5 164.5L444.5 167.5L447.5 170.5M455.5 164.5L452.5 167.5L455.5 170.5M463.5 164.5L460.5 167.5L463.5 170.5M471.5 164.5L468.5 167.5L471.5 170.5M479.5 164.5L476.5 167.5L479.5 170.5M487.5 164.5L484.5 167.5L487.5 170.5M495.5 164.5L492.5 167.5L495.5 170.5M503.5 164.5L500.5 167.5L503.5 170.5M511.5 164.5L508.5 167.5L511.5 170.5M519.5 164.5L516.5 167.5L519.5 170.5M527.5 164.5L524.5 167.5L527.5 170.5M535.5 164.5L532.5 167.5L535.5 170.5M543.5 164.5L540.5 167.5L543.5 170.5M551.5 164.5L548.5 167.5L551.5 170.5M559.5 164.5L556.5 167.5L559.5 170.5M567.5 164.5L564.5 167.5L567.5 170.5M575.5 164.5L572.5 167.5L575.5 170.5M583.5 164.5L580.5 167.5L583.5 170.5M591.5 164.5L588.5 167.5L591.5 170.5M599.5 164.5L596.5 167.5L599.5 170.5M607.5 164.5L604.5 167.5L607.5 170.5M615.5 164.5L612.5 167.5L615.5 170.5M623.5 164.5L620.5 167.5L623.5 170.5M631.5 164.5L628.5 167.5L631.5 170.5M639.5 164.5L636.5 167.5L639.5 170.5M647.5 164.5L644.5 167.5L647.5 170.5M655.5 164.5L652.5 167.5L655.5 170.5M663.5 164.5L660.5 167.5L663.5 170.5M671.5 164.5L668.5 167.5L671.5 170.5M679.5 164.5L676.5 167.5L679.5 170.5M687.5 164.5L684.5 167.5L687.5 170.5M695.5 164.5L692.5 167.5L695.5 170.5M703.5 164.5L700.5 167.5L703.5 170.5M711.5 164.5L708.5 167.5L711.5 170.5M719.5 164.5L716.5 167.5L719.5 170.5M727.5 164.5L724.5 167.5L727.5 170.5M735.5 164.5L732.5 167.5L735.5 170.5M743.5 164.5L740.5 167.5L743.5 170.5M751.5 164.5L748.5 167.5L751.5 170.5M759.5 164.5L756.5 167.5L759.5 170.5M767.5 164.5L764.5 167.5L767.5 170.5M775.5 164.5L772.5 167.5L775.5 170.5M783.5 164.5L780.5 167.5L783.5 170.5M791.5 164.5L788.5 167.5L791.5 170.5M799.5 164.5L796.5 167.5L799.5 170.5M807.5 164.5L804.5 167.5L807.5 170.5M815.5 164.5L812.5 167.5L815.5 170.5M823.5 164.5L820.5 167.5L823.5 170.5M831.5 164.5L828.5 167.5L831.5 170.5M839.5 164.5L836.5 167.5L839.5 170.5M847.5 164.5L844.5 167.5L847.5 170.5M855.5 164.5L852.5 167.5L855.5 170.5M863.5 164.5L860.5 167.5L863.5 170.5M871.5 164.5L868.5 167.5L871.5 170.5M879.5 164.5L876.5 167.5L879.5 170.5M887.5 164.5L884.5 167.5L887.5 170.5M895.5 164.5L892.5 167.5L895.5 170.5M903.5 164.5L900.5 167.5L903.5 170.5M911.5 164.5L908.5 167.5L911.5 170.5M919.5 164.5L916.5 167.5L919.5 170.5M927.5 164.5L924.5 167.5L927.5 170.5M935.5 164.5L932.5 167.5L935.5 170.5M943.5 164.5L940.5 167.5L943.5 170.5"/>
</g>
<g stroke="#0c0c78" fill="none" stroke-width="1">
<path d="M156 183.5H949" shape-rendering="crispEdges"/>
<path d="M159.5 180.5L156.5 183.5L159.5 186.5M167.5 180.5L164.5 183.5L167.5 186.5M175.5 180.5L172.5 183.5L175.5 186.5M183.5 180.5L180.5 183.5L183.5 186.5M191.5 180.5L188.5 183.5L191.5 186.5M199.5 180.5L196.5 183.5L199.5 186.5M207.5 180.5L204.5 183.5L207.5 186.5M215.5 180.5L212.5 183.5L215.5 186.5M223.5 180.5L220.5 183.5L223.5 186.5M231.5 180.5L228.5 183.5L231.5 186.5M239.5 180.5L236.5 183.5L239.5 186.5M247.5 180.5L244.5 183.5L247.5 186.5M255.5 180.5L252.5 183.5L255.5 186.5M263.5 180.5L260.5 183.5L263.5 186.5M271.5 180.5L268.5 183.5L271.5 186.5M279.5 180.5L276.5 183.5L279.5 186.5M287.5 180.5L284.5 183.5L287.5 186.5M295.5 180.5L292.5 183.5L295.5 186.5M303.5 180.5L300.5 183.5L303.5 186.5M311.5 180.5L308.5 183.5L311.5 186.5M319.5 180.5L316.5 183.5L319.5 186.5M327.5 180.5L324.5 183.5L327.5 186.5M335.5 180.5L332.5 183.5L335.5 186.5M343.5 180.5L340.5 183.5L343.5 186.5M351.5 180.5L348.5 183.5L351.5 186.5M359.5 180.5L356.5 183.5L359.5 186.5M367.5 180.5L364.5 183.5L367.5 186.5M375.5 180.5L372.5 183.5L375.5 186.5M383.5 180.5L380.5 183.5L383.5 186.5M391.5 180.5L388.5 183.5L391.5 186.5M399.5 180.5L396.5 183.5L399.5 186.5M407.5 180.5L404.5 183.5L407.5 186.5M415.5 180.5L412.5 183.5L415.5 186.5M423.5 180.5L420.5 183.5L423.5 186.5M431.5 180.5L428.5 183.5L431.5 186.5M439.5 180.5L436.5 183.5L439.5 186.5M447.5 180.5L444.5 183.5L447.5 186.5M455.5 180.5L452.5 183.5L455.5 186.5M463.5 180.5L460.5 183.5L463.5 186.5M471.5 180.5L468.5 183.5L471.5 186.5M479.5 180.5L476.5 183.5L479.5 186.5M487.5 180.5L484.5 183.5L487.5 186.5M495.5 180.5L492.5 183.5L495.5 186.5M503.5 180.5L500.5 183.5L503.5 186.5M511.5 180.5L508.5 183.5L511.5 186.5M519.5 180.5L516.5 183.5L519.5 186.5M527.5 180.5L524.5 183.5L527.5 186.5M535.5 180.5L532.5 183.5L535.5 186.5M543.5 180.5L540.5 183.5L543.5 186.5M551.5 180.5L548.5 183.5L551.5 186.5M559.5 180.5L556.5 183.5L559.5 186.5M567.5 180.5L564.5 183.5L567.5 186.5M575.5 180.5L572.5 183.5L575.5 186.5M583.5 180.5L580.5 183.5L583.5 186.5M591.5 180.5L588.5 183.5L591.5 186.5M599.5 180.5L596.5 183.5L599.5 186.5M607.5 180.5L604.5 183.5L607.5 186.5M615.5 180.5L612.5 183.5L615.5 186.5M623.5 180.5L620.5 183.5L623.5 186.5M631.5 180.5L628.5 183.5L631.5 186.5M639.5 180.5L636.5 183.5L639.5 186.5M647.5 180.5L644.5 183.5L647.5 186.5M655.5 180.5L652.5 183.5L655.5 186.5M663.5 180.5L660.5 183.5L663.5 186.5M671.5 180.5L668.5 183.5L671.5 186.5M679.5 180.5L676.5 183.5L679.5 186.5M687.5 180.5L684.5 183.5L687.5 186.5M695.5 180.5L692.5 183.5L695.5 186.5M703.5 180.5L700.5 183.5L703.5 186.5M711.5 180.5L708.5 183.5L711.5 186.5M719.5 180.5L716.5 183.5L719.5 186.5M727.5 180.5L724.5 183.5L727.5 186.5M735.5 180.5L732.5 183.5L735.5 186.5M743.5 180.5L740.5 183.5L743.5 186.5M751.5 180.5L748.5 183.5L751.5 186.5M759.5 180.5L756.5 183.5L759.5 186.5M767.5 180.5L764.5 183.5L767.5 186.5M775.5 180.5L772.5 183.5L775.5 186.5M783.5 180.5L780.5 183.5L783.5 186.5M791.5 180.5L788.5 183.5L791.5 186.5M799.5 180.5L796.5 183.5L799.5 186.5M807.5 180.5L804.5 183.5L807.5 186.5M815.5 180.5L812.5 183.5L815.5 186.5M823.5 180.5L820.5 183.5L823.5 186.5M831.5 180.5L828.5 183.5L831.5 186.5M839.5 180.5L836.5 183.5L839.5 186.5M847.5 180.5L844.5 183.5L847.5 186.5M855.5 180.5L852.5 183.5L855.5 186.5M863.5 180.5L860.5 183.5L863.5 186.5M871.5 180.5L868.5 183.5L871.5 186.5M879.5 180.5L876.5 183.5L879.5 186.5M887.5 180.5L884.5 183.5L887.5 186.5M895.5 180.5L892.5 183.5L895.5 186.5M903.5 180.5L900.5 183.5L903.5 186.5M911.5 180.5L908.5 183.5L911.5 186.5M919.5 180.5L916.5 183.5L919.5 186.5M927.5 180.5L924.5 183.5L927.5 186.5M935.5 180.5L932.5 183.5L935.5 186.5M943.5 180.5L940.5 183.5L943.5 186.5"/>
</g>
<g stroke="#0c0c78" fill="none" stroke-width="1">
<path d="M156 199.5H949" shape-rendering="crispEdges"/>
<path d="M159.5 196.5L156.5 199.5L159.5 202.5M167.5 196.5L164.5 199.5L167.5 202.5M175.5 196.5L172.5 199.5L175.5 202.5M183.5 196.5L180.5 199.5L183.5 202.5M191.5 196.5L188.5 199.5L191.5 202.5M199.5 196.5L196.5 199.5L199.5 202.5M207.5 196.5L204.5 199.5L207.5 202.5M215.5 196.5L212.5 199.5L215.5 202.5M223.5 196.5L220.5 199.5L223.5 202.5M231.5 196.5L228.5 199.5L231.5 202.5M239.5 196.5L236.5 199.5L239.5 202.5M247.5 196.5L244.5 199.5L247.5 202.5M255.5 196.5L252.5 199.5L255.5 202.5M263.5 196.5L260.5 199.5L263.5 202.5M271.5 196.5L268.5 199.5L271.5 202.5M279.5 196.5L276.5 199.5L279.5 202.5M287.5 196.5L284.5 199.5L287.5 202.5M295.5 196.5L292.5 199.5L295.5 202.5M303.5 196.5L300.5 199.5L303.5 202.5M311.5 196.5L308.5 199.5L311.5 202.5M319.5 196.5L316.5 199.5L319.5 202.5M327.5 196.5L324.5 199.5L327.5 202.5M335.5 196.5L332.5 199.5L335.5 202.5M343.5 196.5L340.5 199.5L343.5 202.5M351.5 196.5L348.5 199.5L351.5 202.5M359.5 196.5L356.5 199.5L359.5 202.5M367.5 196.5L364.5 199.5L367.5 202.5M375.5 196.5L372.5 199.5L375.5 202.5M383.5 196.5L380.5 199.5L383.5 202.5M391.5 196.5L388.5 199.5L391.5 202.5M399.5 196.5L396.5 199.5L399.5 202.5M407.5 196.5L404.5 199.5L407.5 202.5M415.5 196.5L412.5 199.5L415.5 202.5M423.5 196.5L420.5 199.5L423.5 202.5M431.5 196.5L428.5 199.5L431.5 202.5M439.5 196.5L436.5 199.5L439.5 202.5M447.5 196.5L444.5 199.5L447.5 202.5M455.5 196.5L452.5 199.5L455.5 202.5M463.5 196.5L460.5 199.5L463.5 202.5M471.5 196.5L468.5 199.5L471.5 202.5M479.5 196.5L476.5 199.5L479.5 202.5M487.5 196.5L484.5 199.5L487.5 202.5M495.5 196.5L492.5 199.5L495.5 202.5M503.5 196.5L500.5 199.5L503.5 202.5M511.5 196.5L508.5 199.5L511.5 202.5M519.5 196.5L516.5 199.5L519.5 202.5M527.5 196.5L524.5 199.5L527.5 202.5M535.5 196.5L532.5 199.5L535.5 202.5M543.5 196.5L540.5 199.5L543.5 202.5M551.5 196.5L548.5 199.5L551.5 202.5M559.5 196.5L556.5 199.5L559.5 202.5M567.5 196.5L564.5 199.5L567.5 202.5M575.5 196.5L572.5 199.5L575.5 202.5M583.5 196.5L580.5 199.5L583.5 202.5M591.5 196.5L588.5 199.5L591.5 202.5M599.5 196.5L596.5 199.5L599.5 202.5M607.5 196.5L604.5 199.5L607.5 202.5M615.5 196.5L612.5 199.5L615.5 202.5M623.5 196.5L620.5 199.5L623.5 202.5M631.5 196.5L628.5 199.5L631.5 202.5M639.5 196.5L636.5 199.5L639.5 202.5M647.5 196.5L644.5 199.5L647.5 202.5M655.5 196.5L652.5 199.5L655.5 202.5M663.5 196.5L660.5 199.5L663.5 202.5M671.5 196.5L668.5 199.5L671.5 202.5M679.5 196.5L676.5 199.5L679.5 202.5M687.5 196.5L684.5 199.5L687.5 202.5M695.5 196.5L692.5 199.5L695.5 202.5M703.5 196.5L700.5 199.5L703.5 202.5M711.5 196.5L708.5 199.5L711.5 202.5M719.5 196.5L716.5 199.5L719.5 202.5M727.5 196.5L724.5 199.5L727.5 202.5M735.5 196.5L732.5 199.5L735.5 202.5M743.5 196.5L740.5 199.5L743.5 202.5M751.5 196.5L748.5 199.5L751.5 202.5M759.5 196.5L756.5 199.5L759.5 202.5M767.5 196.5L764.5 199.5L767.5 202.5M775.5 196.5L772.5 199.5L775.5 202.5M783.5 196.5L780.5 199.5L783.5 202.5M791.5 196.5L788.5 199.5L791.5 202.5M799.5 196.5L796.5 199.5L799.5 202.5M807.5 196.5L804.5 199.5L807.5 202.5M815.5 196.5L812.5 199.5L815.5 202.5M823.5 196.5L820.5 199.5L823.5 202.5M831.5 196.5L828.5 199.5L831.5 202.5M839.5 196.5L836.5 199.5L839.5 202.5M847.5 196.5L844.5 199.5L847.5 202.5M855.5 196.5L852.5 199.5L855.5 202.5M863.5 196.5L860.5 199.5L863.5 202.5M871.5 196.5L868.5 199.5L871.5 202.5M879.5 196.5L876.5 199.5L879.5 202.5M887.5 196.5L884.5 199.5L887.5 202.5M895.5 196.5L892.5 199.5L895.5 202.5M903.5 196.5L900.5 199.5L903.5 202.5M911.5 196.5L908.5 199.5L911.5 202.5M919.5 196.5L916.5 199.5L919.5 202.5M927.5 196.5L924.5 199.5L927.5 202.5M935.5 196.5L932.5 199.5L935.5 202.5M943.5 196.5L940.5 199.5L943.5 202.5"/>
</g>
<rect x="157" y="230" width="792" height="1" fill="#0c0c78" shape-rendering="crispEdges"/>
<rect x="156" y="301" width="793" height="15" fill="#bebebe" shape-rendering="crispEdges"/>
<g shape-rendering="crispEdges">
<rect x="156" y="364" width="378" height="58" fill="#f4f4f4"/><rect x="157" y="365" width="376" height="56" fill="#fff"/>
<rect x="156" y="380" width="5" height="41" fill="#FFA54F"/>
<rect x="163" y="380" width="5" height="41" fill="#EE9A00"/>
<rect x="170" y="381" width="5" height="40" fill="#8FBC8F"/>
<rect x="177" y="381" width="5" height="40" fill="#8B1C62"/>
<rect x="184" y="380" width="5" height="41" fill="#EE6A50"/>
<rect x="191" y="381" width="5" height="40" fill="#FF0000"/>
<rect x="198" y="378" width="5" height="43" fill="#CDB79E"/>
<rect x="205" y="386" width="5" height="35" fill="#EEEE00"/>
<rect x="212" y="384" width="5" height="37" fill="#EEEE00"/>
<rect x="219" y="385" width="5" height="36" fill="#EEEE00"/>
<rect x="226" y="377" width="5" height="44" fill="#EEEE00"/>
<rect x="233" y="378" width="5" height="43" fill="#EEEE00"/>
<rect x="240" y="379" width="5" height="42" fill="#EEEE00"/>
<rect x="247" y="377" width="5" height="44" fill="#EEEE00"/>
<rect x="254" y="384" width="5" height="37" fill="#EEEE00"/>
<rect x="261" y="382" width="5" height="39" fill="#EEEE00"/>
<rect x="268" y="385" width="5" height="36" fill="#EEEE00"/>
<rect x="275" y="388" width="5" height="33" fill="#EEEE00"/>
<rect x="282" y="379" width="5" height="42" fill="#EEEE00"/>
<rect x="289" y="385" width="5" height="36" fill="#EEEE00"/>
<rect x="296" y="381" width="5" height="40" fill="#00CDCD"/>
<rect x="303" y="377" width="5" height="44" fill="#EE82EE"/>
<rect x="310" y="371" width="5" height="50" fill="#9AC0CD"/>
<rect x="317" y="379" width="5" height="42" fill="#EED5D2"/>
<rect x="324" y="377" width="5" height="44" fill="#EED5D2"/>
<rect x="331" y="379" width="5" height="42" fill="#CDB79E"/>
<rect x="338" y="380" width="5" height="41" fill="#EEC591"/>
<rect x="345" y="379" width="5" height="42" fill="#8B7355"/>
<rect x="352" y="382" width="5" height="39" fill="#8B7355"/>
<rect x="359" y="378" width="5" height="43" fill="#CDAA7D"/>
<rect x="366" y="381" width="5" height="40" fill="#EED5D2"/>
<rect x="373" y="389" width="5" height="32" fill="#B452CD"/>
<rect x="380" y="394" width="5" height="27" fill="#7A378B"/>
<rect x="387" y="390" width="5" height="31" fill="#CDB79E"/>
<rect x="394" y="386" width="5" height="35" fill="#CDB79E"/>
<rect x="401" y="395" width="5" height="26" fill="#CDB79E"/>
<rect x="408" y="380" width="5" height="41" fill="#9ACD32"/>
<rect x="415" y="387" width="5" height="34" fill="#CDB79E"/>
<rect x="422" y="382" width="5" height="39" fill="#7A67EE"/>
<rect x="429" y="379" width="5" height="42" fill="#FFD700"/>
<rect x="436" y="380" width="5" height="41" fill="#FFB6C1"/>
<rect x="443" y="398" width="5" height="23" fill="#CD9B1D"/>
<rect x="450" y="375" width="5" height="46" fill="#B4EEB4"/>
<rect x="457" y="381" width="5" height="40" fill="#D9D9D9"/>
<rect x="464" y="383" width="5" height="38" fill="#3A5FCD"/>
<rect x="471" y="382" width="5" height="39" fill="#1E90FF"/>
<rect x="478" y="383" width="5" height="38" fill="#CDB79E"/>
<rect x="485" y="381" width="5" height="40" fill="#CDB79E"/>
<rect x="492" y="387" width="5" height="34" fill="#FFD39B"/>
<rect x="499" y="364" width="5" height="57" fill="#A6A6A6"/>
<rect x="506" y="373" width="5" height="48" fill="#008B45"/>
<rect x="513" y="377" width="5" height="44" fill="#EED5D2"/>
<rect x="520" y="380" width="5" height="41" fill="#EED5D2"/>
<rect x="527" y="393" width="5" height="28" fill="#FF00FF"/>
<rect x="156" y="422" width="793" height="2" fill="#00006e"/>
</g>
<rect x="156" y="470" width="793" height="1" fill="#30285a" shape-rendering="crispEdges"/>
<text transform="matrix(0.6213 0 0 0.2616 167.88 513.00)" font-size="100" fill="#f00" text-rendering="geometricPrecision">A</text>
<text transform="matrix(0.6411 0 0 0.0565 239.74 512.34)" font-size="100" fill="#aaaa00" text-rendering="geometricPrecision">C</text>
<text transform="matrix(0.6685 0 0 0.0727 311.70 512.00)" font-size="100" fill="#0f0" text-rendering="geometricPrecision">T</text>
<text transform="matrix(0.6650 0 0 0.1163 383.71 512.00)" font-size="100" fill="#0f0" text-rendering="geometricPrecision">T</text>
<text transform="matrix(0.6685 0 0 0.0153 455.70 512.00)" font-size="100" fill="#0f0" text-rendering="geometricPrecision">T</text>
<text transform="matrix(0.6108 0 0 0.1454 457.38 511.00)" font-size="100" fill="#f00" text-rendering="geometricPrecision">A</text>
<text transform="matrix(0.6108 0 0 0.1599 529.38 512.00)" font-size="100" fill="#f00" text-rendering="geometricPrecision">A</text>
<text transform="matrix(0.6108 0 0 0.1017 601.38 512.00)" font-size="100" fill="#f00" text-rendering="geometricPrecision">A</text>
<text transform="matrix(0.6108 0 0 0.1599 673.38 512.00)" font-size="100" fill="#f00" text-rendering="geometricPrecision">A</text>
<text transform="matrix(0.6721 0 0 0.0291 743.49 512.00)" font-size="100" fill="#0f0" text-rendering="geometricPrecision">T</text>
<text transform="matrix(0.6108 0 0 0.1599 817.38 512.00)" font-size="100" fill="#f00" text-rendering="geometricPrecision">A</text>
<text transform="matrix(0.6648 0 0 0.0551 887.66 512.45)" font-size="100" fill="#00f" text-rendering="geometricPrecision">G</text>
</svg></body></html>
